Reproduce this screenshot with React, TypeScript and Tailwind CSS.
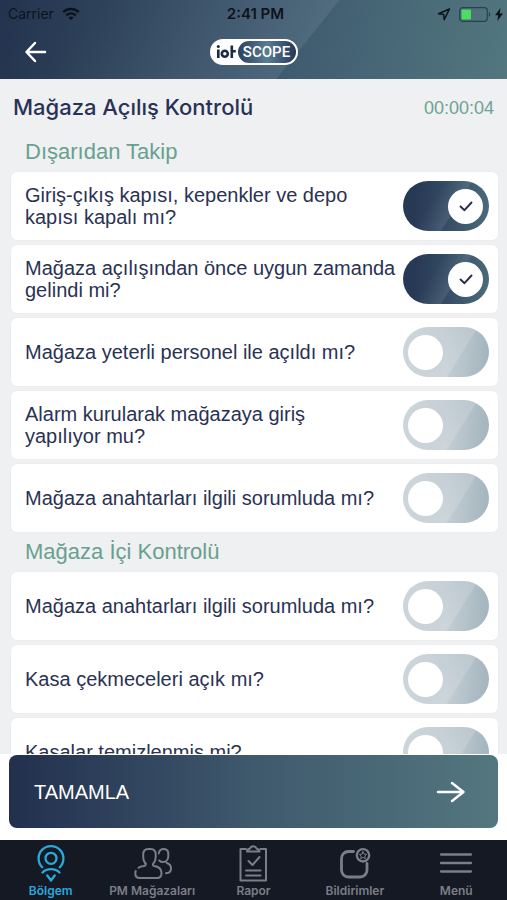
import { useId, useState } from 'react';
import type { ReactNode } from 'react';

const sections = [
  {
    title: 'Dışarıdan Takip',
    items: [
      { text: 'Giriş-çıkış kapısı, kepenkler ve depo\nkapısı kapalı mı?', done: true },
      { text: 'Mağaza açılışından önce uygun zamanda gelindi mi?', done: true },
      { text: 'Mağaza yeterli personel ile açıldı mı?', done: false },
      { text: 'Alarm kurularak mağazaya giriş\nyapılıyor mu?', done: false },
      { text: 'Mağaza anahtarları ilgili sorumluda mı?', done: false },
    ],
  },
  {
    title: 'Mağaza İçi Kontrolü',
    items: [
      { text: 'Mağaza anahtarları ilgili sorumluda mı?', done: false },
      { text: 'Kasa çekmeceleri açık mı?', done: false },
      { text: 'Kasalar temizlenmiş mi?', done: false },
    ],
  },
];

function StatusBar() {
  return (
    <div className="grid h-7 grid-cols-3 items-center pr-1 pl-2 text-[#0d131c]">
      <div className="flex items-center gap-2 text-sm">
        Carrier
        <svg width="18" height="14" viewBox="0 0 18 14" fill="none" stroke="currentColor" strokeWidth="2.4">
          <path d="M1.2 5.2c4.4-4.2 11.200-4.200 15.600 0" />
          <path d="M4.200 8.300c2.800-2.500 6.800-2.500 9.600 0" />
          <path d="M9 13.200 6.300 10.500c1.500-1.400 3.900-1.400 5.400 0z" fill="currentColor" stroke="none" />
        </svg>
      </div>
      <div className="text-center text-[15px] font-semibold">2:41 PM</div>
      <div className="flex items-center justify-end gap-1">
        <svg className="mr-1" width="14" height="13" viewBox="0 0 14 13" fill="none" stroke="currentColor" strokeWidth="1.500" strokeLinejoin="round">
          <path d="M12.500 1 1.500 5.800l5.200.7.500 5.200z" />
        </svg>
        <svg width="32" height="15" viewBox="0 0 32 15">
          <rect x="0.700" y="0.700" width="27.600" height="13.600" rx="3" fill="none" stroke="#26434f" strokeWidth="1.200" />
          <rect x="2.500" y="2.500" width="9.500" height="10" rx="1" fill="#4fdc63" />
          <path d="M29.800 5v5c2-.8 2-4.200 0-5z" fill="#26434f" />
        </svg>
        <svg width="8" height="13" viewBox="0 0 8 13" fill="currentColor">
          <path d="M5.500 0 0 7.200h3.200L2.300 13 8 5.500H4.700z" />
        </svg>
      </div>
    </div>
  );
}

function Logo() {
  return (
    <div className="flex h-[26px] w-[88px] items-center rounded-full bg-white p-[2px] pl-[6px]">
      <svg className="shrink-0" width="21" height="18" viewBox="0 0 21 18" fill="none" stroke="#1d2945" strokeWidth="2.600" role="img" aria-label="iot">
        <path d="M2.300 6.500V15" />
        <circle cx="2.300" cy="3.600" r="1.500" fill="#1d2945" stroke="none" />
        <circle cx="8.800" cy="10.800" r="3" />
        <path d="M15.800 2.500V15M15.800 8.200h4" />
      </svg>
      <div className="ml-auto flex h-[22px] w-[58px] items-center justify-center rounded-full bg-linear-to-r from-[#2b4260] via-[#5b7d92] to-[#24385a] font-[Roboto,sans-serif] text-[15px] font-medium text-white">
        SCOPE
      </div>
    </div>
  );
}

function Toggle({ id, initial }: { id: string; initial: boolean }) {
  const [on, setOn] = useState(initial);
  return (
    <span className="grid h-[50px] w-[86px] shrink-0 items-center">
      <input
        id={id}
        type="checkbox"
        role="switch"
        checked={on}
        onChange={() => setOn(!on)}
        className="peer col-start-1 row-start-1 h-full w-full cursor-pointer appearance-none rounded-full bg-[linear-gradient(122deg,transparent_40%,#ffffff26_63%,transparent_65%),linear-gradient(95deg,#ccd5da_10%,#c5cfd5_50%,#a1b3bc)] checked:bg-[linear-gradient(122deg,transparent_35%,#ffffff18_58%,transparent_60%),linear-gradient(95deg,#283956_15%,#344b63_50%,#4b6c7a)]"
      />
      <span className="pointer-events-none col-start-1 row-start-1 ml-[5px] flex size-[35px] items-center justify-center rounded-full bg-white peer-checked:ml-[45px]">
        {on && (
          <svg width="14" height="11" viewBox="0 0 14 11" fill="none" stroke="#282b4a" strokeWidth="1.900" strokeLinecap="round" strokeLinejoin="round">
            <path d="M1.500 5.500 5.500 9.200 12.500 1.500" />
          </svg>
        )}
      </span>
    </span>
  );
}

function CheckRow({ text, done }: { text: string; done: boolean }) {
  const id = useId();
  return (
    <li className="flex h-[68px] items-center justify-between gap-1 rounded-md bg-white pr-[9px] pl-[14px] shadow-[0_0_2px_#0000000d]">
      <label htmlFor={id} className="pb-px text-xl/[22px] whitespace-pre-line text-[#2a3254]">
        {text}
      </label>
      <Toggle id={id} initial={done} />
    </li>
  );
}

function Tab({ label, active, children }: { label: string; active?: boolean; children: ReactNode }) {
  return (
    <a
      href="#"
      aria-current={active ? 'page' : undefined}
      className={`flex flex-col items-center gap-px pt-1 text-xs/4 font-semibold whitespace-nowrap ${active ? 'text-[#2aa9dc]' : 'text-[#7b7e88]'}`}
    >
      <svg width="40" height="38" viewBox="0 0 40 38" fill="none" stroke="currentColor" strokeWidth="2" strokeLinecap="round" strokeLinejoin="round">
        {children}
      </svg>
      {label}
    </a>
  );
}

export default function App() {
  return (
    <div className="flex h-screen flex-col bg-white font-['Liberation_Sans',Arial,sans-serif]">
      <header className="h-[79px] shrink-0 bg-[linear-gradient(128.600deg,transparent_calc(50%-140px),#ffffff14_calc(50%+42px),transparent_calc(50%+43px)),linear-gradient(100deg,#24334f,#30465c_25%,#3c566d_50%,#52777f)] font-[Inter,sans-serif]">
        <StatusBar />
        <div className="grid h-12 grid-cols-3 items-center px-6">
          <button type="button" aria-label="Geri" className="w-6 text-white">
            <svg width="24" height="22" viewBox="0 0 24 22" fill="none" stroke="currentColor" strokeWidth="2.500" strokeLinecap="round" strokeLinejoin="round">
              <path d="M21 11H3M11 2 2.500 11 11 20" />
            </svg>
          </button>
          <div className="flex justify-center">
            <Logo />
          </div>
        </div>
      </header>

      <main className="min-h-0 flex-1 overflow-y-auto bg-[#eef0f2] pr-[9px] pl-[11px] [scrollbar-width:none]">
        <div className="flex h-[57px] items-center justify-between pr-1 pl-[2px]">
          <h1 className="font-[Inter,sans-serif] text-[22px] font-medium text-[#2a3254]">Mağaza Açılış Kontrolü</h1>
          <time className="text-lg text-[#6fa294]">00:00:04</time>
        </div>
        {sections.map((section) => (
          <section key={section.title}>
            <h2 className="h-9 pl-[14px] text-[22px]/8 text-[#69a08f]">{section.title}</h2>
            <ul className="flex flex-col gap-[5px] pb-1">
              {section.items.map((item) => (
                <CheckRow key={item.text} text={item.text} done={item.done} />
              ))}
            </ul>
          </section>
        ))}
      </main>

      <div className="shrink-0 px-[9px] pt-px pb-3">
        <button
          type="button"
          className="flex h-[73px] w-full items-center justify-between rounded-lg bg-linear-to-r from-[#22304e] via-[#3f596d] to-[#53777f] pr-8 pl-[25px] text-xl text-white"
        >
          TAMAMLA
          <svg width="30" height="22" viewBox="0 0 30 22" fill="none" stroke="currentColor" strokeWidth="2.500" strokeLinecap="round" strokeLinejoin="round">
            <path d="M2 11h25M16 2l11.500 9L16 20" />
          </svg>
        </button>
      </div>

      <nav className="grid h-[60px] shrink-0 grid-cols-5 bg-[#151924] font-[Inter,sans-serif]">
        <Tab label="Bölgem" active>
          <circle cx="20" cy="14.300" r="5.500" strokeWidth="2.300" />
          <path d="M11.200 23.200a12.400 12.400 0 1 1 17.600 0" strokeWidth="2.300" />
          <path d="M11.500 28.500c4.200-4.400 12.800-4.400 17 0M16.300 31.500l3.700 5 3.700-5" strokeWidth="2.300" />
        </Tab>
        <Tab label="PM Mağazaları">
          <path d="M13.500 19.500c-1.700-1.700-2.300-4-2.300-6.500V10.500c0-3.500 2-5.500 5-5.500h2.500c3 0 5 2 5 5.500V13c0 2.500-.6 4.800-2.300 6.500-.8.800-.7 2.200.6 2.400 4.500.5 7.500 2.600 7.500 7.300 0 3.300-1.800 4.800-4.500 4.800H8c-3.200 0-4.700-1.500-4.700-4.500 0-1 .1-1.800.4-2.500" />
          <path d="M6.500 23.800c1.500-1.300 3.500-1.800 5.500-1.900 1.600-.1 2.200-1.600 1.500-2.400" />
          <path d="M26.800 9.500c.3-6 9.500-6 9.500 0v3c0 4-3.300 6-6.300 5.500-1.200-.2-2-.8-2.800-1.500" />
          <path d="M34.800 19c2.700.8 4.200 2.700 4.200 5.500 0 3-1.800 4.700-5 4.700" />
        </Tab>
        <Tab label="Rapor">
          <path d="M13 5H7.500V36.500h25.500V5H27.500" />
          <path d="M14 7.500c0-1.500 1.500-2.500 3-3 1-3 5.500-3 6.500 0 1.500.5 3 1.500 3 3z" />
          <path d="m15.500 17 4 4 7-8M13 26.500h14.500M13 31.500h14.500" />
        </Tab>
        <Tab label="Bildirimler">
          <path d="M18.500 7.500H13.500c-4 0-7 3-7 7V26c0 4 3 7 7 7h11.500c4 0 7-3 7-7v-6.500" strokeWidth="2.800" />
          <circle cx="28" cy="11.300" r="6.200" strokeWidth="2.300" />
          <path d="m28 7.800 1.100 2.300 2.500.3-1.800 1.700.5 2.500-2.300-1.200-2.300 1.200.5-2.500-1.800-1.700 2.500-.3z" strokeWidth="1" />
        </Tab>
        <Tab label="Menü">
          <path d="M5 10.500h30M5 19h30M5 27.500h30" strokeWidth="2.300" />
        </Tab>
      </nav>
    </div>
  );
}
